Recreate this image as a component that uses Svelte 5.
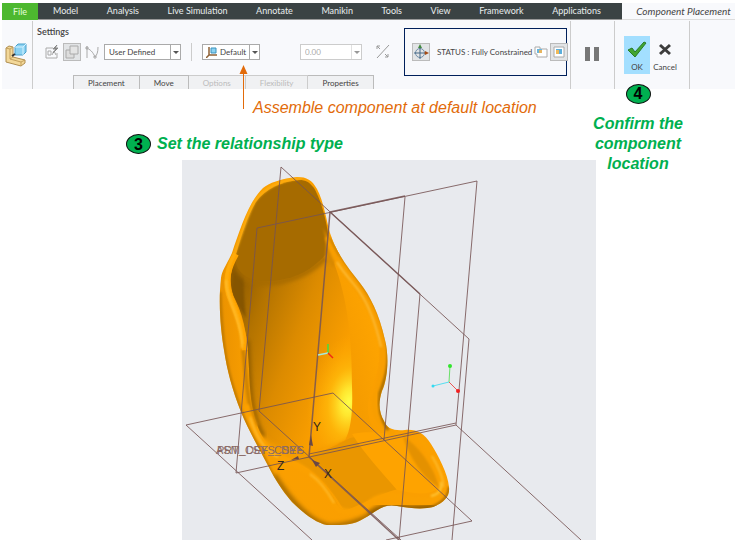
<script lang="ts">
	const menus = ['Model', 'Analysis', 'Live Simulation', 'Annotate', 'Manikin', 'Tools', 'View', 'Framework', 'Applications'];

	const panels = [
		{ name: 'Placement', enabled: true },
		{ name: 'Move', enabled: true },
		{ name: 'Options', enabled: false },
		{ name: 'Flexibility', enabled: false },
		{ name: 'Properties', enabled: true }
	];

	let connection = $state('User Defined');
	let constraint = $state('Default');
	let offset = $state('0.00');
</script>

<div class="page">
	<header class="ribbon">
		<nav class="menu">
			<button class="file">File</button>
			<div class="menu-items">
				{#each menus as menu}
					<button>{menu}</button>
				{/each}
			</div>
			<button class="current">Component Placement</button>
		</nav>

		<div class="body">
			<div class="group component">
				<svg width="22" height="24" viewBox="0 0 22 24">
					<path d="M1 5l3-2 4 1v10l12 3v3l-4 3L1 19z" fill="#f3d899" stroke="#b08e50" />
					<path d="M1 5l4 1v10l11 3v4M5 6l3-2M5 16l3-2M16 19l4-2" fill="none" stroke="#c4a05c" />
					<path d="M10 4l3-3h8v8l-3 3h-8z" fill="#8bd2f2" stroke="#4aa0cb" />
					<path d="M10 4h8v8M18 4l3-3" fill="none" stroke="#d6f2ff" />
					<path d="M7 13l3-2" stroke="#333" stroke-width="2" />
				</svg>
			</div>

			<div class="group settings">
				<div class="options">
					<h2>Settings</h2>
					<div class="controls">
						<button class="icon" aria-label="Manual placement">
							<svg width="14" height="14" viewBox="0 0 14 14" fill="none" stroke="#aaa">
								<path d="M1 3h7M1 3v10h11V8M3 6v4h3V6zM7 10l2-4 2 4" />
								<path d="M12 0L8 4h3L8 8l5-5h-3z" fill="#888" stroke="#888" />
							</svg>
						</button>
						<button class="icon pressed" aria-label="Interface placement">
							<svg width="14" height="14" viewBox="0 0 14 14" fill="#ddd" stroke="#aaa">
								<path d="M1 5h8v8H1z" />
								<path d="M5 1h8v8H5z" fill="#e4e4e4" />
							</svg>
						</button>
						<button class="icon" aria-label="Convert constraints">
							<svg width="14" height="14" viewBox="0 0 14 14" fill="none" stroke="#aaa">
								<path d="M2 1v12M1 3c4 1 7 4 9 9M13 2c0 5-1 8-3 10M1 2h2v2H1zM9 11h2v2H9z" />
							</svg>
						</button>
						<div class="combo connection">
							<select aria-label="Connection type" bind:value={connection}>
								<option>User Defined</option>
							</select>
							<span class="caret"></span>
						</div>
						<span class="divider"></span>
						<div class="combo constraint">
							<svg width="12" height="12" viewBox="0 0 12 12">
								<path d="M3 1v8h8M3 9l-3 3" fill="none" stroke="#8f6136" stroke-width="1.5" />
								<path d="M5 2h5v5H5z" fill="#8bd2f2" stroke="#3a92bd" />
							</svg>
							<select aria-label="Constraint type" bind:value={constraint}>
								<option>Default</option>
							</select>
							<span class="caret"></span>
						</div>
						<div class="combo offset">
							<input aria-label="Offset" bind:value={offset} disabled />
							<span class="caret"></span>
						</div>
						<button class="icon" aria-label="Flip orientation" disabled>
							<svg width="16" height="16" viewBox="0 0 16 16" fill="none" stroke="#999">
								<path d="M14 1L2 14" />
								<path d="M5 5L2 2M2 5V2h3M10 10l3 3M13 10v3h-3" />
							</svg>
						</button>
					</div>
					<div class="panels">
						{#each panels as panel}
							<button disabled={!panel.enabled}>{panel.name}</button>
						{/each}
					</div>
				</div>

				<div class="status">
					<button class="icon pressed" aria-label="Show 3D dragger">
						<svg width="16" height="16" viewBox="0 0 16 16" fill="none">
							<circle cx="7" cy="9" r="4.500" stroke="#6e8da8" />
							<path d="M1 9h10M7 4v11" stroke="#456785" />
							<path d="M11 9h2" stroke="#a65c2a" />
							<path d="M12 7l4 2-4 2z" fill="#a44b16" />
							<path d="M5 4l2-4 2 4z" fill="#41873f" />
						</svg>
					</button>
					<output>STATUS : Fully Constrained</output>
					<button class="icon window" aria-label="Separate window">
						<svg width="14" height="12" viewBox="0 0 14 12">
							<path d="M1 1h5v2h7v8H3V8H1z" fill="#fff" stroke="#aaa" />
							<path d="M3 3h5v4H3z" fill="#69b6df" />
							<path d="M5 4h3v3H5z" fill="#e7b45d" />
						</svg>
					</button>
					<button class="icon pressed" aria-label="Assembly window">
						<svg width="12" height="12" viewBox="0 0 12 12">
							<path d="M1 1h10v10H1z" fill="#fff" stroke="#aaa" />
							<path d="M3 3h6v5H3z" fill="#5baedc" />
							<path d="M3 4h3v4H3z" fill="#efb959" />
						</svg>
					</button>
				</div>
			</div>

			<div class="group pause">
				<button aria-label="Pause">
					<svg width="16" height="14" viewBox="0 0 16 14" fill="#777">
						<path d="M1 0h5v14H1zM10 0h5v14h-5z" />
					</svg>
				</button>
			</div>

			<div class="group confirm">
				<button class="ok">
					<svg width="20" height="18" viewBox="0 0 20 18">
						<path d="M1 10l4-2 3 4L17 2l2 1L8 17z" fill="#42a532" stroke="#267b26" />
					</svg>
					OK
				</button>
				<button>
					<svg width="14" height="18" viewBox="0 0 14 18">
						<path d="M2 5l10 9M12 5L2 14" stroke="#3d3d3d" stroke-width="3" />
					</svg>
					Cancel
				</button>
			</div>
			<div class="group"></div>
		</div>
	</header>

	<svg class="arrow" width="10" height="44" viewBox="0 0 10 44">
		<path d="M5.500 6v38" stroke="#e26b0a" />
		<path d="M5.500 0l4 9h-8z" fill="#e26b0a" />
	</svg>

	<main>
		<section class="model">
			<p class="hint">Assemble component at default location</p>
			<p class="step"><span class="badge">3</span> Set the relationship type</p>

			<svg class="canvas" viewBox="182 160 414 380" role="img" aria-label="Seat shell with datum planes">
				<defs>
					<linearGradient id="shell" x1="0" x2="1" y1="0" y2="0">
						<stop offset="0" stop-color="#e89000" />
						<stop offset="0.15" stop-color="#fa9f00" />
						<stop offset="1" stop-color="#fb9f00" />
					</linearGradient>
					<linearGradient id="back" gradientUnits="userSpaceOnUse" x1="228" x2="347" y1="300" y2="345">
						<stop offset="0" stop-color="#8e5b00" />
						<stop offset="0.25" stop-color="#b37300" />
						<stop offset="0.6" stop-color="#dc8b00" />
						<stop offset="1" stop-color="#fa9e00" />
					</linearGradient>
					<linearGradient id="wing" gradientUnits="userSpaceOnUse" x1="345" x2="385" y1="350" y2="340">
						<stop offset="0" stop-color="#f69c00" />
						<stop offset="1" stop-color="#ffa500" />
					</linearGradient>
					<radialGradient id="glow" gradientUnits="userSpaceOnUse" cx="349" cy="402" r="70" gradientTransform="translate(349 402) rotate(8) scale(.6 1) translate(-349 -402)">
						<stop offset="0" stop-color="#ffff48" />
						<stop offset="0.2" stop-color="#ffe62e" />
						<stop offset="0.5" stop-color="#ffbd0c" stop-opacity="0.7" />
						<stop offset="1" stop-color="#ffa700" stop-opacity="0" />
					</radialGradient>
					<clipPath id="outline">
						<path d="M297 177C280 179 269 183 263 188C249 201 239 232 232 253C226 266 222 270 221 278C218 305 221 332 224 350C227 370 232 389 241 412C247 427 258 447 272 473C279 486 286 495 292 502C303 513 316 523 327 525C340 525 352 526 363 519C375 513 382 503 397 506C412 509 426 509 433 507C445 502 450 496 449 487C448 474 438 455 431 444C424 433 416 429 405 430C394 431 387 429 384 421C379 412 378 403 382 391C388 379 389 355 385 340C379 313 370 296 360 283C350 270 337 255 330 233C326 219 324 202 317 189C312 180 307 177 297 177Z" />
					</clipPath>
					<clipPath id="inner">
						<path d="M236 256C229 272 229 288 236 301C245 320 248 342 249 369C250 397 252 413 259 430C267 448 279 455 295 460L345 440C351 430 353 410 352 387C352 340 348 300 334 263L327 235Z" />
					</clipPath>
					<filter id="soft" x="-20%" y="-20%" width="140%" height="140%"><feGaussianBlur stdDeviation="2" /></filter>
					<filter id="sheen" x="-20%" y="-20%" width="140%" height="140%"><feGaussianBlur stdDeviation="1" /></filter>
				</defs>

				<rect x="182" y="160" width="414" height="380" fill="#e8eaee" />

				<g clip-path="url(#outline)">
					<rect x="215" y="170" width="240" height="360" fill="url(#shell)" />

					<!-- backrest -->
					<path d="M327 238C336 270 370 300 377 335C386 368 368 387 368 407C368 424 375 436 396 440L338 444L340 250Z" fill="url(#wing)" />
					<g clip-path="url(#inner)">
						<rect x="225" y="230" width="135" height="235" fill="url(#back)" />
						<rect x="285" y="320" width="70" height="145" fill="url(#glow)" />
						<path d="M250 420C262 442 285 456 315 450C335 445 350 440 354 432V470H250Z" fill="#f49c00" filter="url(#soft)" />
						<path d="M247 340C250 390 248 410 263 437" fill="none" stroke="#8f5c00" stroke-width="5" filter="url(#soft)" />
						<path d="M236 256L246 260C243 275 243 292 246 318L231 295Z" fill="#855400" filter="url(#sheen)" />
						<path d="M235 258C238 276 250 283 264 283C290 283 312 272 327 256" fill="none" stroke="#a66b00" stroke-width="5" filter="url(#soft)" />
					</g>
					<path d="M299 180C281 182 266 188 256 202C247 216 240 240 235 258C236 270 244 280 262 281C290 282 311 272 328 252C331 237 323 203 314 188C309 182 306 180 299 180Z" fill="#a66b00" />
					<path d="M323 228C327 240 326 250 325 258L333 268L338 255Z" fill="#d98900" filter="url(#sheen)" />

					<!-- seat -->
					<path d="M292 461C310 456 330 449 350 438L372 434L404 488C385 490 365 504 344 511C336 495 315 468 292 461Z" fill="#ea9600" />
					<path d="M352 434C370 430 390 434 403 436C420 452 432 472 438 489C425 497 408 492 397 490C380 470 366 456 352 434Z" fill="#fea300" />
					<path d="M403 436C420 447 434 468 439 487C425 480 409 458 403 436Z" fill="#e49100" filter="url(#sheen)" />
					<path d="M301 467C314 475 327 487 335 501C338 507 341 510 345 510" fill="none" stroke="#b97800" />

					<!-- outer shading -->
					<path d="M274 475C292 504 311 522 327 526C342 527 360 522 373 514" fill="none" stroke="#a16800" stroke-width="5" filter="url(#soft)" />
					<path d="M370 515C382 504 396 507 410 509L438 507" fill="none" stroke="#8f5c00" stroke-width="7" filter="url(#soft)" />
					<path d="M220 292C222 342 225 371 242 413C249 430 262 452 274 478" fill="none" stroke="#c17a00" stroke-width="3" filter="url(#sheen)" />
					<path d="M243 350C247 377 246 404 257 426" fill="none" stroke="#cf8300" stroke-width="4" filter="url(#sheen)" />
					<path d="M449 487C449 497 441 504 432 507" fill="none" stroke="#b37200" stroke-width="3" filter="url(#sheen)" />

					<!-- rolled rim -->
					<path d="M236 254C228 268 225 280 229 294C235 310 243 325 245 350" fill="none" stroke="#ffa400" stroke-width="6" />
					<path d="M246 405C253 431 264 453 291 462C315 473 326 488 335 504C343 517 359 512 371 502C386 490 402 500 419 501C437 501 445 494 442 482C440 470 430 448 416 435" fill="none" stroke="#fba000" stroke-width="6" filter="url(#sheen)" />
					<path d="M301 178C281 180 265 188 255 201C246 217 240 241 233 257C225 272 225 285 230 297C236 311 241 324 243 344" fill="none" stroke="#ffb218" stroke-width="2" filter="url(#sheen)" />
					<path d="M226 280C226 293 231 303 236 317C240 328 242 338 242 348M250 417C255 433 264 451 278 457M310 474C320 481 328 492 334 503M432 456C440 470 444 481 443 487" fill="none" stroke="#ffc238" stroke-width="1.500" filter="url(#sheen)" />
					<path d="M328 237C335 264 348 276 357 288C372 308 379 329 382 345C386 367 379 386 375 398C372 411 380 426 394 435" fill="none" stroke="#f89e00" stroke-width="6" filter="url(#sheen)" />
					<path d="M337 262C344 274 353 282 359 291C370 307 377 329 381 347" fill="none" stroke="#ffc342" stroke-width="1.500" filter="url(#sheen)" />
					<path d="M387 340C391 363 385 380 380 393C378 407 381 419 388 430" fill="none" stroke="#a86d00" stroke-width="3" filter="url(#sheen)" />
					<path d="M330 238C340 260 356 276 365 290C376 305 383 326 386 340" fill="none" stroke="#bd7900" stroke-width="1.500" filter="url(#sheen)" />
					<path d="M441 482C442 490 438 495 431 496" fill="none" stroke="#ffd44b" stroke-width="1.500" filter="url(#sheen)" />
				</g>

				<!-- datum planes -->
				<g fill="none" stroke="#765454" stroke-opacity="0.85">
					<path d="M281 167L469 339L452 540M281 167L259 411L401 540M420 294L399 540" />
					<path d="M257 228L477 181L456 425L236 473ZM405 197L384 440" />
					<path d="M186 425L333 393L472 521L386 540M186 425L312 540M456 425L581 540M309 454L456 423" />
					<path d="M330 212L405 196M330 212L420 294M309 457L399 540M330 212L309 457" stroke-width="1.500" />
				</g>
				<path d="M312 460l8 3-4 4zM299 459l-8 1 7-4zM309 445l2-10 2 11z" fill="#684747" />

				<!-- default coordinate system -->
				<g class="labels">
					<text x="216" y="454">ASM_DEF_CSYS</text>
					<text x="217" y="454">PRT_CSYS_DEF</text>
				</g>
				<g class="axes">
					<text x="313" y="431">Y</text>
					<text x="277" y="470">Z</text>
					<text x="324" y="478">X</text>
				</g>

				<!-- spin center and dragger -->
				<g fill="none">
					<path d="M328 353v-9" stroke="#42e142" stroke-width="1.500" />
					<path d="M328 353l-10 2" stroke="#a5ecdc" stroke-width="1.500" />
					<path d="M328 353l5 5" stroke="#f02c14" stroke-width="1.500" />
					<path d="M449 382l1-16" stroke="#69df67" />
					<path d="M449 382l-16 4" stroke="#55dff0" />
					<path d="M449 382l9 9" stroke="#ed5353" />
				</g>
				<circle cx="450" cy="366" r="2" fill="#31e52c" />
				<circle cx="433" cy="386" r="1.500" fill="#34daf1" />
				<circle cx="458" cy="391" r="2" fill="#f22020" />
			</svg>
		</section>

		<aside>
			<span class="badge">4</span>
			<p>Confirm the component location</p>
		</aside>
	</main>
</div>

<style>
	:global(body) {
		margin: 0;
		background: #fff;
	}

	.page {
		position: relative;
		padding: 3px 3px 0 2px;
		font-family: Lato, 'Open Sans', sans-serif;
		font-size: 9px;
		color: #444;
	}

	button,
	select,
	input {
		font: inherit;
		color: inherit;
		padding: 0;
		border: 0;
		background: none;
		white-space: nowrap;
	}

	svg {
		display: block;
		flex: none;
	}

	.ribbon {
		background: #f8f9fc;
	}

	.menu {
		display: flex;
		height: 17px;
		line-height: 16px;
	}

	.file {
		width: 36px;
		background: #4db82f;
		color: #e5ffdc;
	}

	.menu-items {
		display: flex;
		flex: 0 1 584px;
		justify-content: space-between;
		padding: 0 21px 0 15px;
		box-sizing: border-box;
		background: #3b4344;
		border-bottom: 1px solid #999;
		color: #e9eeee;
	}

	.current {
		flex: 1;
		font-size: 10px;
		font-style: italic;
		padding-left: 10px;
		border-bottom: 1px solid #ddd;
	}

	.body {
		display: flex;
		height: 69px;
		font-size: 8px;
	}

	.group {
		border-right: 1px solid #ccc;
		box-sizing: border-box;
		margin-top: 1px;
	}

	.group:last-child {
		flex: 1;
		border: 0;
	}

	.component {
		width: 31px;
		padding: 22px 0 0 3px;
	}

	.settings {
		display: flex;
		flex: 0 1 538px;
		padding-right: 3px;
	}

	.options {
		flex: 1;
		display: flex;
		flex-direction: column;
	}

	h2 {
		margin: 5px 0 0 4px;
		font-size: 9px;
		font-weight: 600;
		line-height: 12px;
	}

	.controls {
		display: flex;
		align-items: center;
		height: 18px;
		margin-top: 5px;
		padding-left: 10px;
	}

	.icon {
		display: grid;
		place-items: center;
		width: 18px;
		height: 18px;
		flex: none;
		box-sizing: border-box;
	}

	.controls .icon {
		margin-right: 2px;
	}

	.pressed {
		background: #e2e4e6;
		border: 1px solid #bbb;
	}

	.combo {
		position: relative;
		display: flex;
		align-items: center;
		height: 16px;
		box-sizing: border-box;
		border: 1px solid #aaa;
		background: #fff;
	}

	.combo select,
	.combo input {
		flex: 1;
		min-width: 0;
		height: 14px;
		appearance: none;
		padding: 0 11px 0 4px;
	}

	.caret {
		position: absolute;
		top: 0;
		right: 0;
		bottom: 0;
		width: 9px;
		border-left: 1px solid #aaa;
		pointer-events: none;
	}

	.caret::after {
		content: '';
		position: absolute;
		top: 6px;
		left: 2px;
		border: 3px solid transparent;
		border-top-color: #555;
		border-bottom: 0;
	}

	.connection {
		width: 77px;
		margin-left: 1px;
	}

	.divider {
		height: 18px;
		border-left: 1px solid #ccc;
		margin: 0 10px;
	}

	.constraint {
		width: 58px;
		padding-left: 3px;
	}

	.combo.constraint select {
		padding: 0 9px 0 2px;
	}

	.offset {
		width: 62px;
		margin: 0 12px 0 40px;
		border-color: #ccc;
		color: #aaa;
	}

	.offset .caret {
		border-color: #ccc;
		opacity: 0.6;
	}

	.panels {
		display: flex;
		margin: auto 0 0 40px;
		height: 14px;
	}

	.panels button {
		padding: 0 14px;
		background: #f0f1f3;
		border: 1px solid #bbb;
		border-left-width: 0;
		border-bottom: 0;
	}

	.panels button:first-child {
		border-left-width: 1px;
	}

	.panels button:disabled {
		color: #bbb;
		border-color: #ccc;
	}

	.status {
		display: flex;
		align-items: center;
		box-sizing: border-box;
		width: 163px;
		height: 48px;
		margin-top: 7px;
		padding-left: 7px;
		border: 1px solid #00205b;
	}

	output {
		flex: 1;
		padding-left: 7px;
		white-space: nowrap;
	}

	.pause {
		width: 44px;
	}

	.pause button {
		margin: 26px 0 0 13px;
	}

	.confirm {
		display: flex;
		width: 75px;
		padding: 15px 0 0 9px;
		gap: 2px;
	}

	.confirm button {
		display: flex;
		flex-direction: column;
		align-items: center;
		justify-content: end;
		width: 26px;
		height: 38px;
		line-height: 14px;
	}

	.confirm svg {
		margin-bottom: 2px;
	}

	.confirm .ok {
		background: #a3dfff;
	}

	/* callout arrow that points at the constraint list */
	.arrow {
		position: absolute;
		left: 238px;
		top: 65px;
	}

	main {
		display: grid;
		grid-template-columns: 594px minmax(80px, 1fr);
		font: italic 16px 'Liberation Sans', Arial, sans-serif;
	}

	.model p {
		margin: 0;
		line-height: 20px;
	}

	.model .hint {
		margin: 9px 0 0 251px;
		color: #e26b0a;
	}

	.model .step {
		display: flex;
		align-items: center;
		gap: 6px;
		margin: 16px 0 6px 124px;
	}

	.step,
	aside {
		color: #00b050;
		font-weight: bold;
	}

	.badge {
		display: grid;
		place-items: center;
		box-sizing: border-box;
		width: 25px;
		height: 20px;
		border: 1px solid #111;
		border-radius: 50%;
		background: #00b050;
		color: #000;
		font-style: normal;
	}

	.canvas {
		width: calc(100% - 180px);
		margin-left: 180px;
	}

	.labels {
		font: 11px 'Liberation Sans', sans-serif;
		fill: #8a6a66;
	}

	.axes {
		font: 12px 'Liberation Sans', sans-serif;
		fill: #33251c;
	}

	aside {
		display: flex;
		flex-direction: column;
		align-items: center;
		width: 100px;
		margin: -5px 0 0 -8px;
		text-align: center;
	}

	aside p {
		margin: 10px 0 0;
		line-height: 20px;
	}
</style>
